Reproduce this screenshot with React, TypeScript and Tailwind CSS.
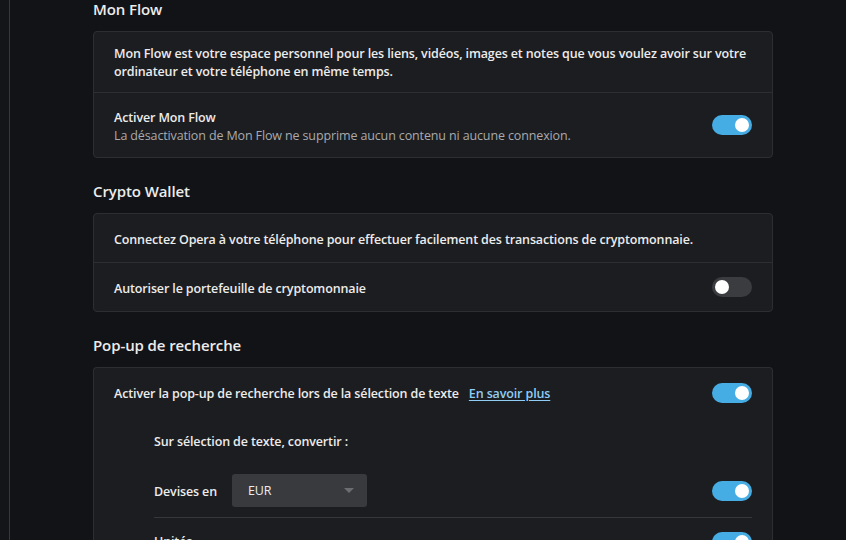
import React from 'react';

function Toggle({ on }: { on: boolean }) {
  return on ? (
    <div className="flex h-[20px] w-[40px] shrink-0 items-center justify-end rounded-full bg-[#45ade4] px-[3px]">
      <div className="h-[14px] w-[14px] rounded-full bg-white" />
    </div>
  ) : (
    <div className="flex h-[20px] w-[40px] shrink-0 items-center justify-start rounded-full bg-[#3b3c40] px-[3px]">
      <div className="h-[14px] w-[14px] rounded-full bg-white" />
    </div>
  );
}

function Heading({ children, className }: { children: React.ReactNode; className?: string }) {
  return (
    <h2 className={`h-[20px] text-[15px] leading-[18px] font-semibold tracking-[-0.1px] text-[#ececec] ${className ?? ''}`}>
      {children}
    </h2>
  );
}

export default function App() {
  return (
    <div
      className="flex h-[540px] w-[846px] overflow-hidden bg-[#121316] text-[12.5px] leading-[18px] tracking-[-0.13px] text-[#ececec]"
      style={{ fontFamily: '"Open Sans", "Noto Sans", sans-serif' }}
    >
      <div className="w-[10px] shrink-0 border-r border-[#37383b] bg-[#141518]" />
      <div className="ml-[83px] w-[680px] shrink-0">
        <Heading>Mon Flow</Heading>
        <div className="mt-[11px] rounded-[4px] border border-[#2d2e32] bg-[#1c1d20]">
          <div className="px-[20px] pt-[13px] pb-[11px] font-semibold">
            Mon Flow est votre espace personnel pour les liens, vidéos, images et notes que vous voulez avoir sur votre
            ordinateur et votre téléphone en même temps.
          </div>
          <div className="flex items-center justify-between border-t border-[#2d2e32] px-[20px] py-[12px]">
            <div className="pt-[4px]">
              <div className="font-semibold">Activer Mon Flow</div>
              <div className="text-[#a9aaad]">La désactivation de Mon Flow ne supprime aucun contenu ni aucune connexion.</div>
            </div>
            <Toggle on />
          </div>
        </div>

        <Heading className="mt-[24px]">Crypto Wallet</Heading>
        <div className="mt-[11px] rounded-[4px] border border-[#2d2e32] bg-[#1c1d20]">
          <div className="px-[20px] pt-[17px] pb-[13px] font-semibold">
            Connectez Opera à votre téléphone pour effectuer facilement des transactions de cryptomonnaie.
          </div>
          <div className="flex items-center justify-between border-t border-[#2d2e32] px-[20px] py-[14px]">
            <div className="h-[20px] pt-[3px] font-semibold">Autoriser le portefeuille de cryptomonnaie</div>
            <Toggle on={false} />
          </div>
        </div>

        <Heading className="mt-[24px]">Pop-up de recherche</Heading>
        <div className="mt-[11px] rounded-t-[4px] border border-b-0 border-[#2d2e32] bg-[#1c1d20] pb-[40px]">
          <div className="flex items-center justify-between px-[20px] pt-[15px]">
            <div className="h-[20px] pt-[2px] font-semibold">
              Activer la pop-up de recherche lors de la sélection de texte
              <a href="#" className="ml-[10px] text-[#8fcdf5] underline underline-offset-2">
                En savoir plus
              </a>
            </div>
            <Toggle on />
          </div>
          <div className="mr-[20px] ml-[60px]">
            <div className="mt-[30px] font-semibold">Sur sélection de texte, convertir :</div>
            <div className="mt-[23px] flex items-center justify-between border-b border-[#36373b] pb-[10px]">
              <div className="flex items-center">
                <span className="w-[78px] pt-[2px] font-semibold">Devises en</span>
                <div className="flex h-[33px] w-[135px] items-center justify-between rounded-[3px] bg-[#383a3e] pr-[13px] pl-[16px]">
                  <span className="pt-[1px]">EUR</span>
                  <svg width="10" height="5" viewBox="0 0 10 5">
                    <path d="M0 0h10L5 5z" fill="#6b6d71" />
                  </svg>
                </div>
              </div>
              <Toggle on />
            </div>
            <div className="flex items-center justify-between pt-[14px]">
              <span className="font-semibold">Unités</span>
              <Toggle on />
            </div>
          </div>
        </div>
      </div>
    </div>
  );
}
